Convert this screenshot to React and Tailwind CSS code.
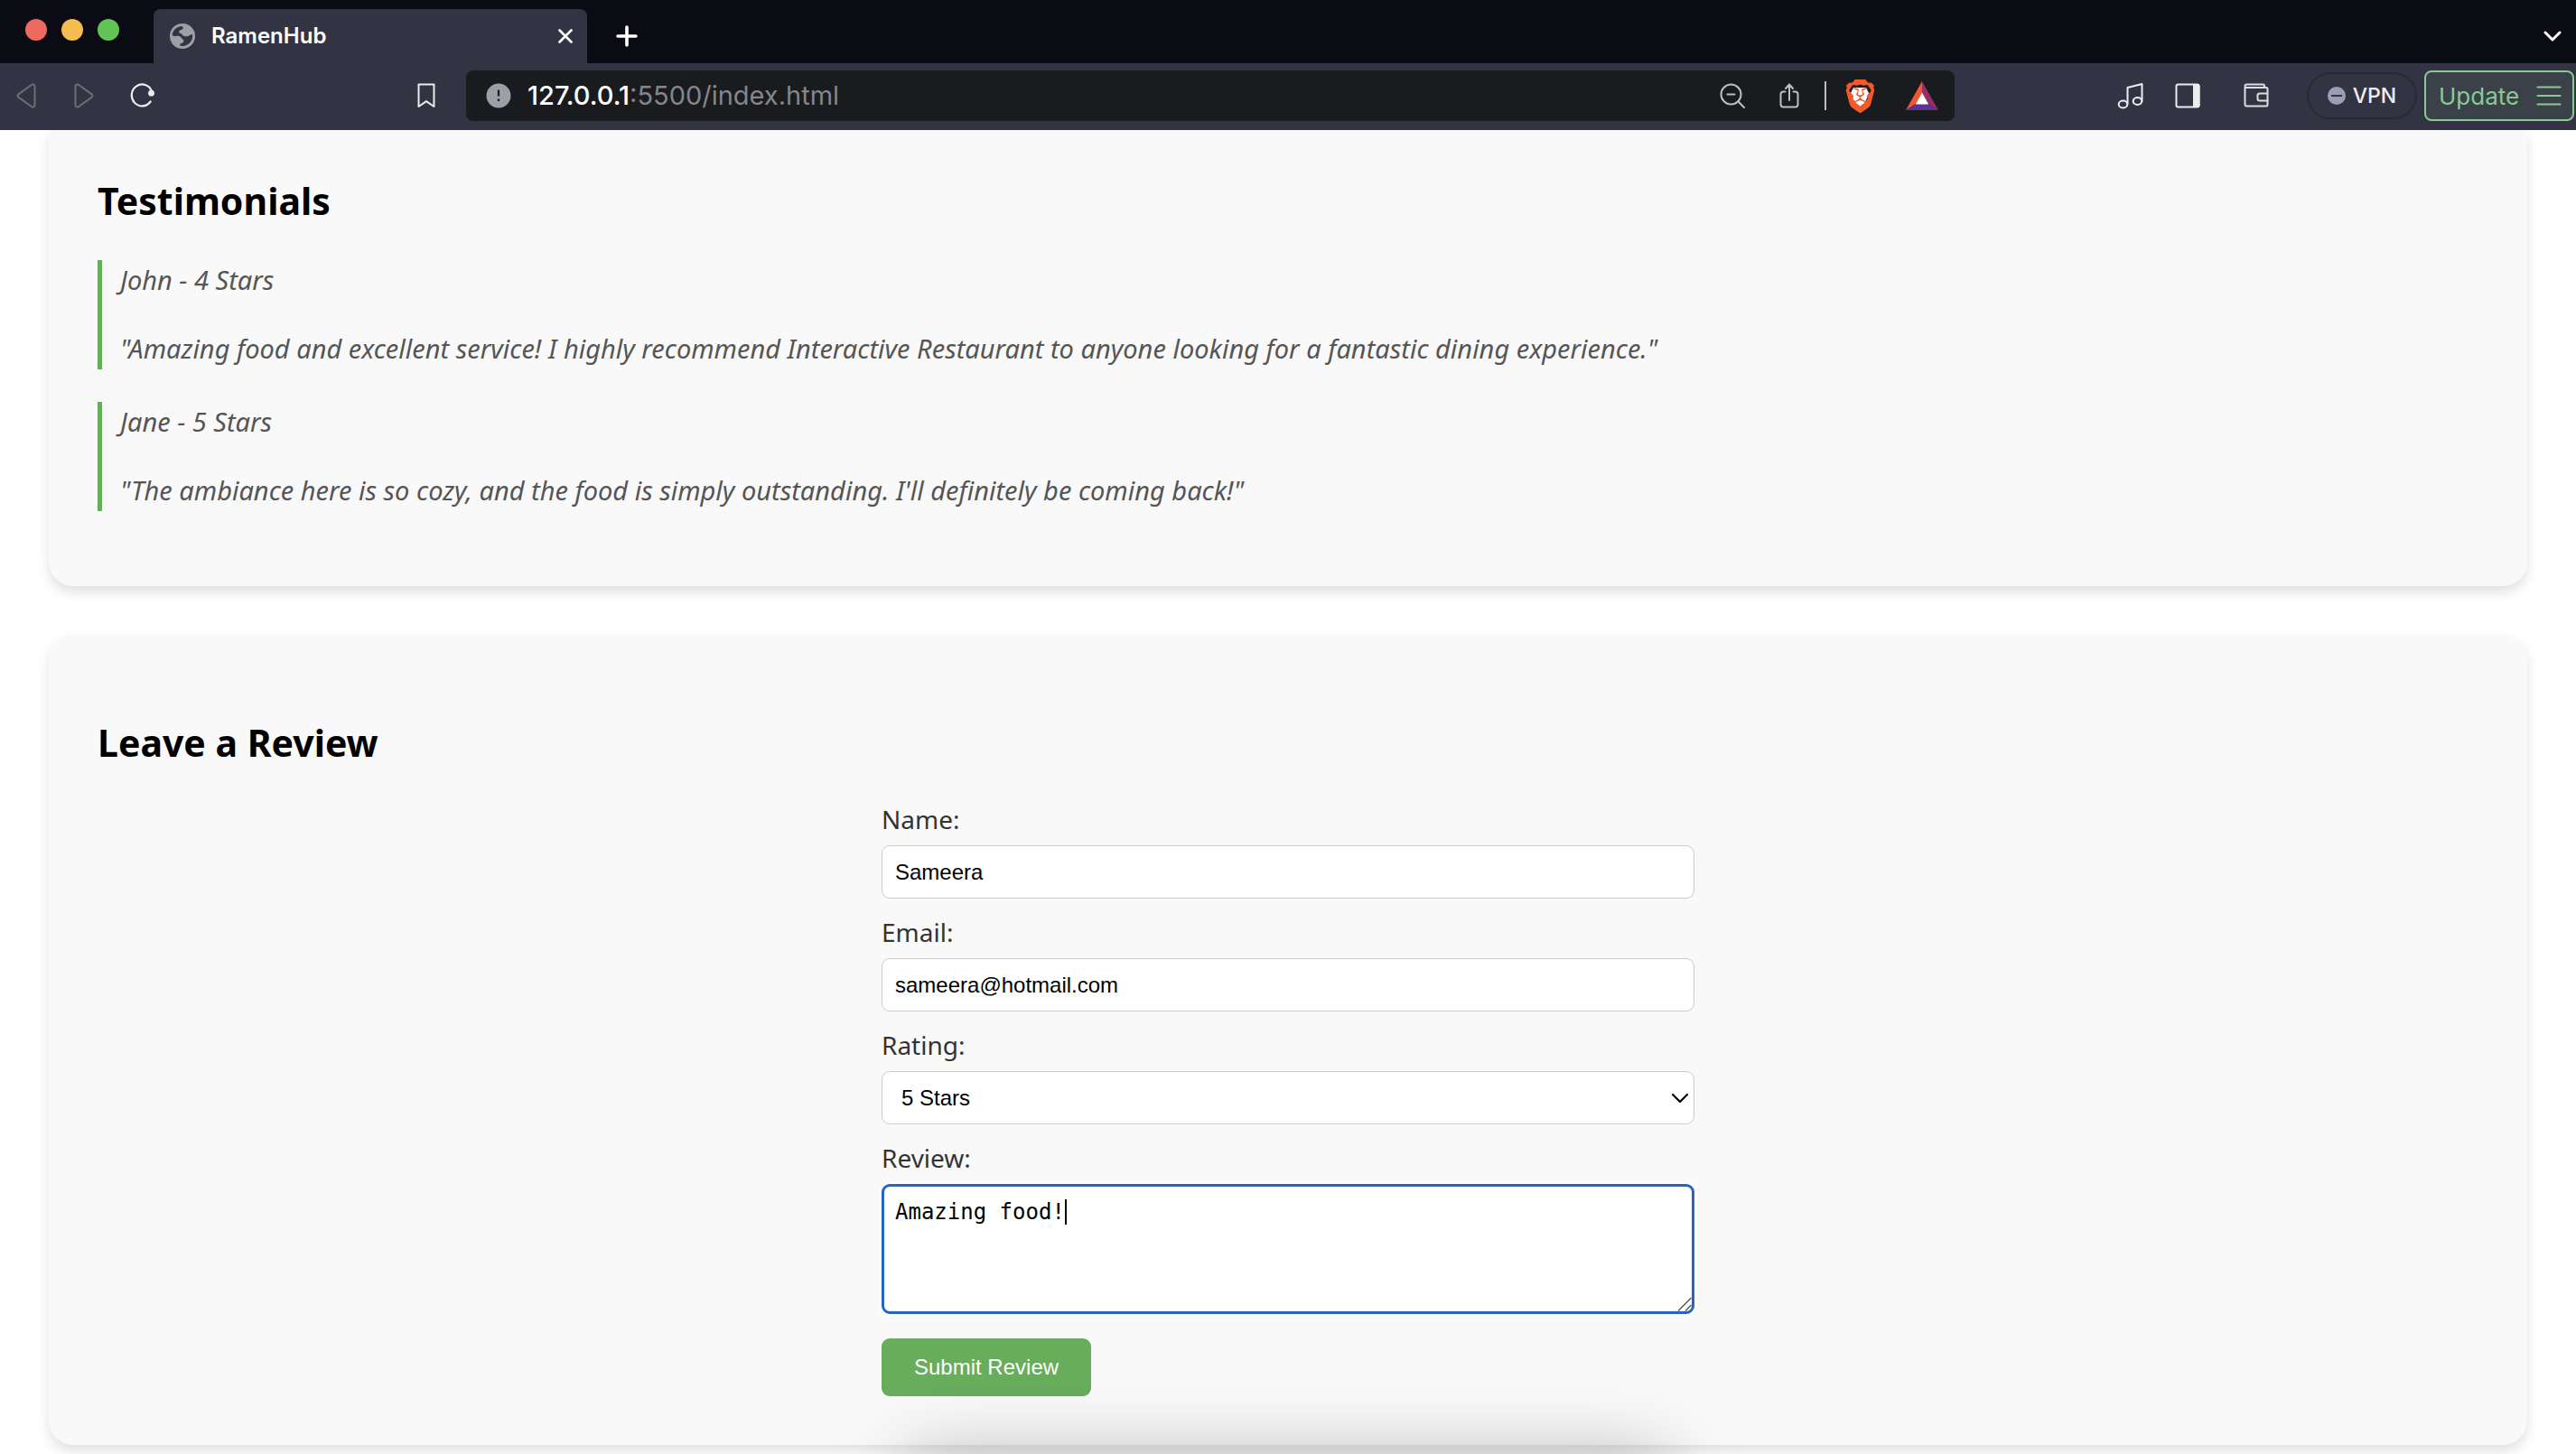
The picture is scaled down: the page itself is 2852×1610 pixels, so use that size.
import React from "react";
import { SiBrave } from "react-icons/si";

const stroke = {
  fill: "none",
  strokeLinecap: "round",
  strokeLinejoin: "round",
};

function GlobeIcon() {
  return (
    <svg width="28" height="28" viewBox="0 0 84 84" aria-hidden="true">
      <circle cx="42" cy="42" r="42" fill="#9aa0a6" />
      <path
        fill="#323443"
        d="M8 40C9 24 20 11 38 9C46 10 46 17 40 20C33 22 29 25 31 30C33 34 39 32 41 37C43 42 50 44 57 43C65 42 69 36 75 36C78 54 66 71 46 75L34 74L34 69C35 66 40 66 43 64C47 61 47 56 44 53C39 50 38 43 30 41C22 41 14 43 8 40Z"
      />
    </svg>
  );
}

function CloseIcon() {
  return (
    <svg width="16" height="16" viewBox="0 0 16 16" stroke="#fff" strokeWidth="2.6" {...stroke}>
      <path d="M1.5 1.5L14.5 14.5M14.5 1.5L1.5 14.5" />
    </svg>
  );
}

function PlusIcon() {
  return (
    <svg width="24" height="24" viewBox="0 0 24 24" stroke="#fff" strokeWidth="3.6" {...stroke}>
      <path d="M12 2V22M2 12H22" />
    </svg>
  );
}

function ChevronIcon({ color, width = 3 }) {
  return (
    <svg width="20" height="12" viewBox="0 0 20 12" stroke={color} strokeWidth={width} {...stroke}>
      <path d="M2 2L10 10L18 2" />
    </svg>
  );
}

function BackIcon() {
  return (
    <svg width="22" height="28" viewBox="0 0 22 28" stroke="#6d6e79" strokeWidth="2" {...stroke}>
      <path d="M17.2 1.8L2.4 12.4Q1 14 2.4 15.6L17.2 26.2Q20.5 27.4 20.5 24V4Q20.5 .6 17.2 1.8Z" />
    </svg>
  );
}

function ForwardIcon() {
  return (
    <svg width="22" height="28" viewBox="0 0 22 28" stroke="#6d6e79" strokeWidth="2" {...stroke}>
      <path d="M4.8 1.8L19.6 12.4Q21 14 19.6 15.6L4.8 26.2Q1.5 27.4 1.5 24V4Q1.5 .6 4.8 1.8Z" />
    </svg>
  );
}

function ReloadIcon() {
  return (
    <svg width="28" height="28" viewBox="0 0 28 28" stroke="#ededed" strokeWidth="2.2" {...stroke}>
      <path d="M22.6 20.5A11.5 12 0 1 1 24 9" />
      <circle cx="23.5" cy="11.2" r="3.4" fill="#ededed" stroke="none" />
    </svg>
  );
}

function BookmarkIcon() {
  return (
    <svg width="20" height="28" viewBox="0 0 20 28" stroke="#ededed" strokeWidth="2" {...stroke}>
      <path d="M1.5 1.5H18.5V26L10 20.2L1.5 26Z" />
    </svg>
  );
}

function InfoIcon() {
  return (
    <svg width="28" height="28" viewBox="0 0 28 28">
      <circle cx="14" cy="14" r="13.5" fill="#9aa0a6" />
      <path d="M14 7.5V14.5" stroke="#1a1b1f" strokeWidth="2.2" />
      <circle cx="14" cy="18.8" r="1.4" fill="#1a1b1f" />
    </svg>
  );
}

function ZoomOutIcon() {
  return (
    <svg width="28" height="28" viewBox="0 0 28 28" stroke="#bdbec0" strokeWidth="2" {...stroke}>
      <circle cx="12.5" cy="12.5" r="11" />
      <path d="M8.5 12.5H16.5M20.5 20.5L27 27" />
    </svg>
  );
}

function ShareIcon() {
  return (
    <svg width="22" height="28" viewBox="0 0 22 28" stroke="#bdbec0" strokeWidth="2" {...stroke}>
      <path d="M6.5 9.5H4.5Q1.5 9.5 1.5 12.5V23.5Q1.5 26.5 4.5 26.5H17.5Q20.5 26.5 20.5 23.5V12.5Q20.5 9.5 17.5 9.5H15.5M11 19V1.5M7 6L11 1.5L15 6" />
    </svg>
  );
}

function BraveIcon() {
  return (
    <span className="flex size-[38px] items-center justify-center">
      <span className="relative flex items-center justify-center">
        <svg className="absolute" width="30" height="30" viewBox="0 0 30 30">
          <path fill="#fff" d="M8 6H22L25 12L20 25L15 28L10 25L5 12Z" />
        </svg>
        <SiBrave className="relative size-[37px] text-[#f1592a]" />
      </span>
    </span>
  );
}

function BatIcon() {
  return (
    <svg width="36" height="32" viewBox="0 0 36 32">
      <path fill="#f25634" d="M18 0V13L11 25L0 32Z" />
      <path fill="#942e63" d="M18 0V13L25 25L36 32Z" />
      <path fill="#5f3192" d="M0 32L11 25H25L36 32Z" />
      <path fill="#fff" d="M18 12.5L25.2 25.5H10.8Z" />
    </svg>
  );
}

function MusicIcon() {
  return (
    <svg width="30" height="30" viewBox="0 0 30 30" stroke="#ededed" strokeWidth="2" {...stroke}>
      <path d="M11.5 24V6L27.5 2V21" />
      <ellipse cx="6.5" cy="24.5" rx="4.8" ry="3.9" />
      <ellipse cx="22.5" cy="21" rx="4.8" ry="3.9" />
    </svg>
  );
}

function SidebarIcon() {
  return (
    <svg width="28" height="28" viewBox="0 0 28 28">
      <rect x="1.5" y="1.5" width="25" height="25" rx="2" fill="none" stroke="#ededed" strokeWidth="2" />
      <path fill="#ededed" d="M20 1H25.5Q27.5 1 27.5 3V25Q27.5 27 25.5 27H20Z" />
    </svg>
  );
}

function WalletIcon() {
  return (
    <svg width="28" height="28" viewBox="0 0 28 28" stroke="#dedee2" strokeWidth="2" {...stroke}>
      <path d="M26.5 11V6.5Q26.5 5 25 5H3.5Q1.5 5 1.5 3.5V23.5Q1.5 25.5 3.5 25.5H25Q26.5 25.5 26.5 24V19.5M1.5 3.5Q1.5 1.5 3.5 1.5H21.5Q23 1.5 23 3V5" />
      <path d="M26.5 11.5H18Q15.5 11.5 15.5 13.5V17.5Q15.5 19.5 18 19.5H26.5Z" />
    </svg>
  );
}

function MenuIcon() {
  return (
    <svg width="28" height="22" viewBox="0 0 28 22" stroke="#8cc895" strokeWidth="2.2" {...stroke}>
      <path d="M1.5 1.5H26.5M1.5 11H26.5M1.5 20.5H26.5" />
    </svg>
  );
}

function GripIcon() {
  return (
    <svg width="16" height="16" viewBox="0 0 16 16" stroke="#555" strokeWidth="1.4" fill="none">
      <path d="M1 15.500L15.500 1M9 15.500L15.500 9" />
    </svg>
  );
}

function TitleBar() {
  return (
    <div className="flex h-[70px] items-end bg-[#0b0b14]">
      <div className="flex h-full w-[170px] shrink-0 items-center gap-4 pb-1 pl-7">
        <button aria-label="Close window" className="size-6 rounded-full bg-[#ed6a5e]" />
        <button aria-label="Minimise window" className="size-6 rounded-full bg-[#f4bd50]" />
        <button aria-label="Maximise window" className="size-6 rounded-full bg-[#61c454]" />
      </div>
      <div className="flex h-[60px] w-[480px] items-center rounded-t-lg bg-[#323443] pr-4 pl-[18px]">
        <GlobeIcon />
        <span className="ml-[18px] flex-1 text-2xl font-semibold text-white">RamenHub</span>
        <button aria-label="Close tab"><CloseIcon /></button>
      </div>
      <button aria-label="New tab" className="flex h-[60px] w-[88px] items-center justify-center"><PlusIcon /></button>
      <button aria-label="Search tabs" className="mr-4 ml-auto flex h-[60px] items-center"><ChevronIcon color="#fff" /></button>
    </div>
  );
}

function Toolbar() {
  return (
    <div className="flex h-[74px] items-center bg-[#323443] pb-0.5">
      <div className="flex w-[516px] shrink-0 items-center pl-[18px]">
        <button aria-label="Back"><BackIcon /></button>
        <button aria-label="Forward" className="ml-[42px]"><ForwardIcon /></button>
        <button aria-label="Reload" className="ml-10"><ReloadIcon /></button>
        <button aria-label="Bookmark" className="mr-[34px] ml-auto"><BookmarkIcon /></button>
      </div>
      <div className="flex h-14 flex-1 items-center rounded-lg bg-[#1a1b1f] pr-[18px] pl-[22px]">
        <InfoIcon />
        <a href="#top" className="ml-[18px] flex-1 text-[29px] leading-10 text-[#85868a]">
          <span className="font-medium text-white">127.0.0.1</span>:5500/index.html
        </a>
        <button aria-label="Zoom out"><ZoomOutIcon /></button>
        <button aria-label="Share" className="ml-[38px]"><ShareIcon /></button>
        <span className="ml-7 h-8 w-0.5 bg-[#bdbec0]" />
        <button aria-label="Shields" className="ml-[18px]"><BraveIcon /></button>
        <button aria-label="Rewards" className="ml-8"><BatIcon /></button>
      </div>
      <div className="flex w-[688px] shrink-0 items-center justify-end pr-0.5">
        <button aria-label="Playlist"><MusicIcon /></button>
        <button aria-label="Sidebar" className="ml-[34px]"><SidebarIcon /></button>
        <button aria-label="Wallet" className="ml-12"><WalletIcon /></button>
        <button className="ml-[42px] flex h-[52px] w-[122px] items-center justify-center gap-2 rounded-full border-2 border-[#282a35] text-[23px] font-medium text-[#ededf3]">
          <span className="flex size-5 items-center justify-center rounded-full bg-[#9a9db3]">
            <span className="h-0.5 w-3 bg-[#323443]" />
          </span>
          VPN
        </button>
        <button className="ml-2 flex h-14 w-[166px] items-center justify-between rounded-lg border-2 border-[#8cc895] bg-[#3a4148] pr-3 pl-3.5 text-[26px] text-[#8cc895]">
          Update
          <MenuIcon />
        </button>
      </div>
    </div>
  );
}

const testimonials = [
  {
    author: "John - 4 Stars",
    quote:
      '"Amazing food and excellent service! I highly recommend Interactive Restaurant to anyone looking for a fantastic dining experience."',
  },
  {
    author: "Jane - 5 Stars",
    quote: '"The ambiance here is so cozy, and the food is simply outstanding. I\'ll definitely be coming back!"',
  },
];

const heading = "mb-[39px] text-[41px] leading-[54px] font-bold text-black";
const label = "mb-[9px] block text-[28px] leading-[39px] text-[#333]";
const field =
  "mb-[18px] block h-[59px] w-full rounded-[9px] border border-[#ccc] bg-white px-3.5 font-['Liberation_Sans',sans-serif] text-2xl text-black";

function Testimonials() {
  return (
    <section className="rounded-b-[27px] bg-[#f9f9f9] px-[54px] pt-[51px] pb-[83px] shadow-[0_7px_14px_rgba(0,0,0,0.12)]">
      <h2 className={heading}>Testimonials</h2>
      <div className="flex flex-col gap-9">
        {testimonials.map((t) => (
          <blockquote
            key={t.author}
            className="flex flex-col gap-9 border-l-5 border-[#67ad5b] pt-0.5 pb-[3px] pl-5 text-[29px] leading-10 text-[#555] italic"
          >
            <p>{t.author}</p>
            <p>{t.quote}</p>
          </blockquote>
        ))}
      </div>
    </section>
  );
}

function ReviewForm() {
  return (
    <section className="rounded-[27px] bg-[#f9f9f9] px-[54px] pt-[92px] pb-[54px] shadow-[0_7px_14px_rgba(0,0,0,0.12)]">
      <h2 className={heading}>Leave a Review</h2>
      <form className="mx-auto max-w-[900px]" onSubmit={(e) => e.preventDefault()}>
        <label htmlFor="name" className={label}>Name:</label>
        <input id="name" type="text" defaultValue="Sameera" className={field} />
        <label htmlFor="email" className={label}>Email:</label>
        <input id="email" type="email" defaultValue="sameera@hotmail.com" className={field} />
        <label htmlFor="rating" className={label}>Rating:</label>
        <div className="relative">
          <select id="rating" defaultValue="5" className={`${field} appearance-none pl-[21px]`}>
            <option value="5">5 Stars</option>
            <option value="4">4 Stars</option>
            <option value="3">3 Stars</option>
            <option value="2">2 Stars</option>
            <option value="1">1 Star</option>
          </select>
          <span className="pointer-events-none absolute inset-y-0 right-1.5 flex items-center">
            <ChevronIcon color="#000" width={2.2} />
          </span>
        </div>
        <label htmlFor="review" className={label}>Review:</label>
        <div className="relative mb-[27px] font-['DejaVu_Sans_Mono',monospace] text-2xl leading-7 text-black">
          <textarea
            id="review"
            defaultValue="Amazing food!"
            className="block h-[144px] w-full resize-none rounded-[9px] border-3 border-[#2563c9] bg-white px-3 py-3.5 shadow-[0_0_0_2px_white] outline-none"
          />
          <span aria-hidden="true" className="pointer-events-none absolute top-[17px] left-[15px] flex">
            <span className="invisible">Amazing food!</span>
            <span className="h-7 w-0.5 bg-black" />
          </span>
          <span className="pointer-events-none absolute right-[3px] bottom-[3px]">
            <GripIcon />
          </span>
        </div>
        <button
          type="submit"
          className="block h-16 rounded-[9px] bg-[#67ad5b] px-9 font-['Liberation_Sans',sans-serif] text-2xl text-white"
        >
          Submit Review
        </button>
      </form>
    </section>
  );
}

export default function App() {
  return (
    <div id="top" className="flex h-screen flex-col overflow-hidden bg-white">
      <header className="shrink-0 font-['Inter',sans-serif]">
        <TitleBar />
        <Toolbar />
      </header>
      <main className="relative min-h-0 flex-1 overflow-hidden font-['Noto_Sans',sans-serif]">
        <div className="flex flex-col gap-[54px] px-[54px]">
          <Testimonials />
          <ReviewForm />
        </div>
        <div className="pointer-events-none absolute top-full left-1/2 h-40 w-[860px] -translate-x-1/2 rounded-[40px] shadow-[0_0_80px_rgba(0,0,0,0.25)]" />
      </main>
    </div>
  );
}
